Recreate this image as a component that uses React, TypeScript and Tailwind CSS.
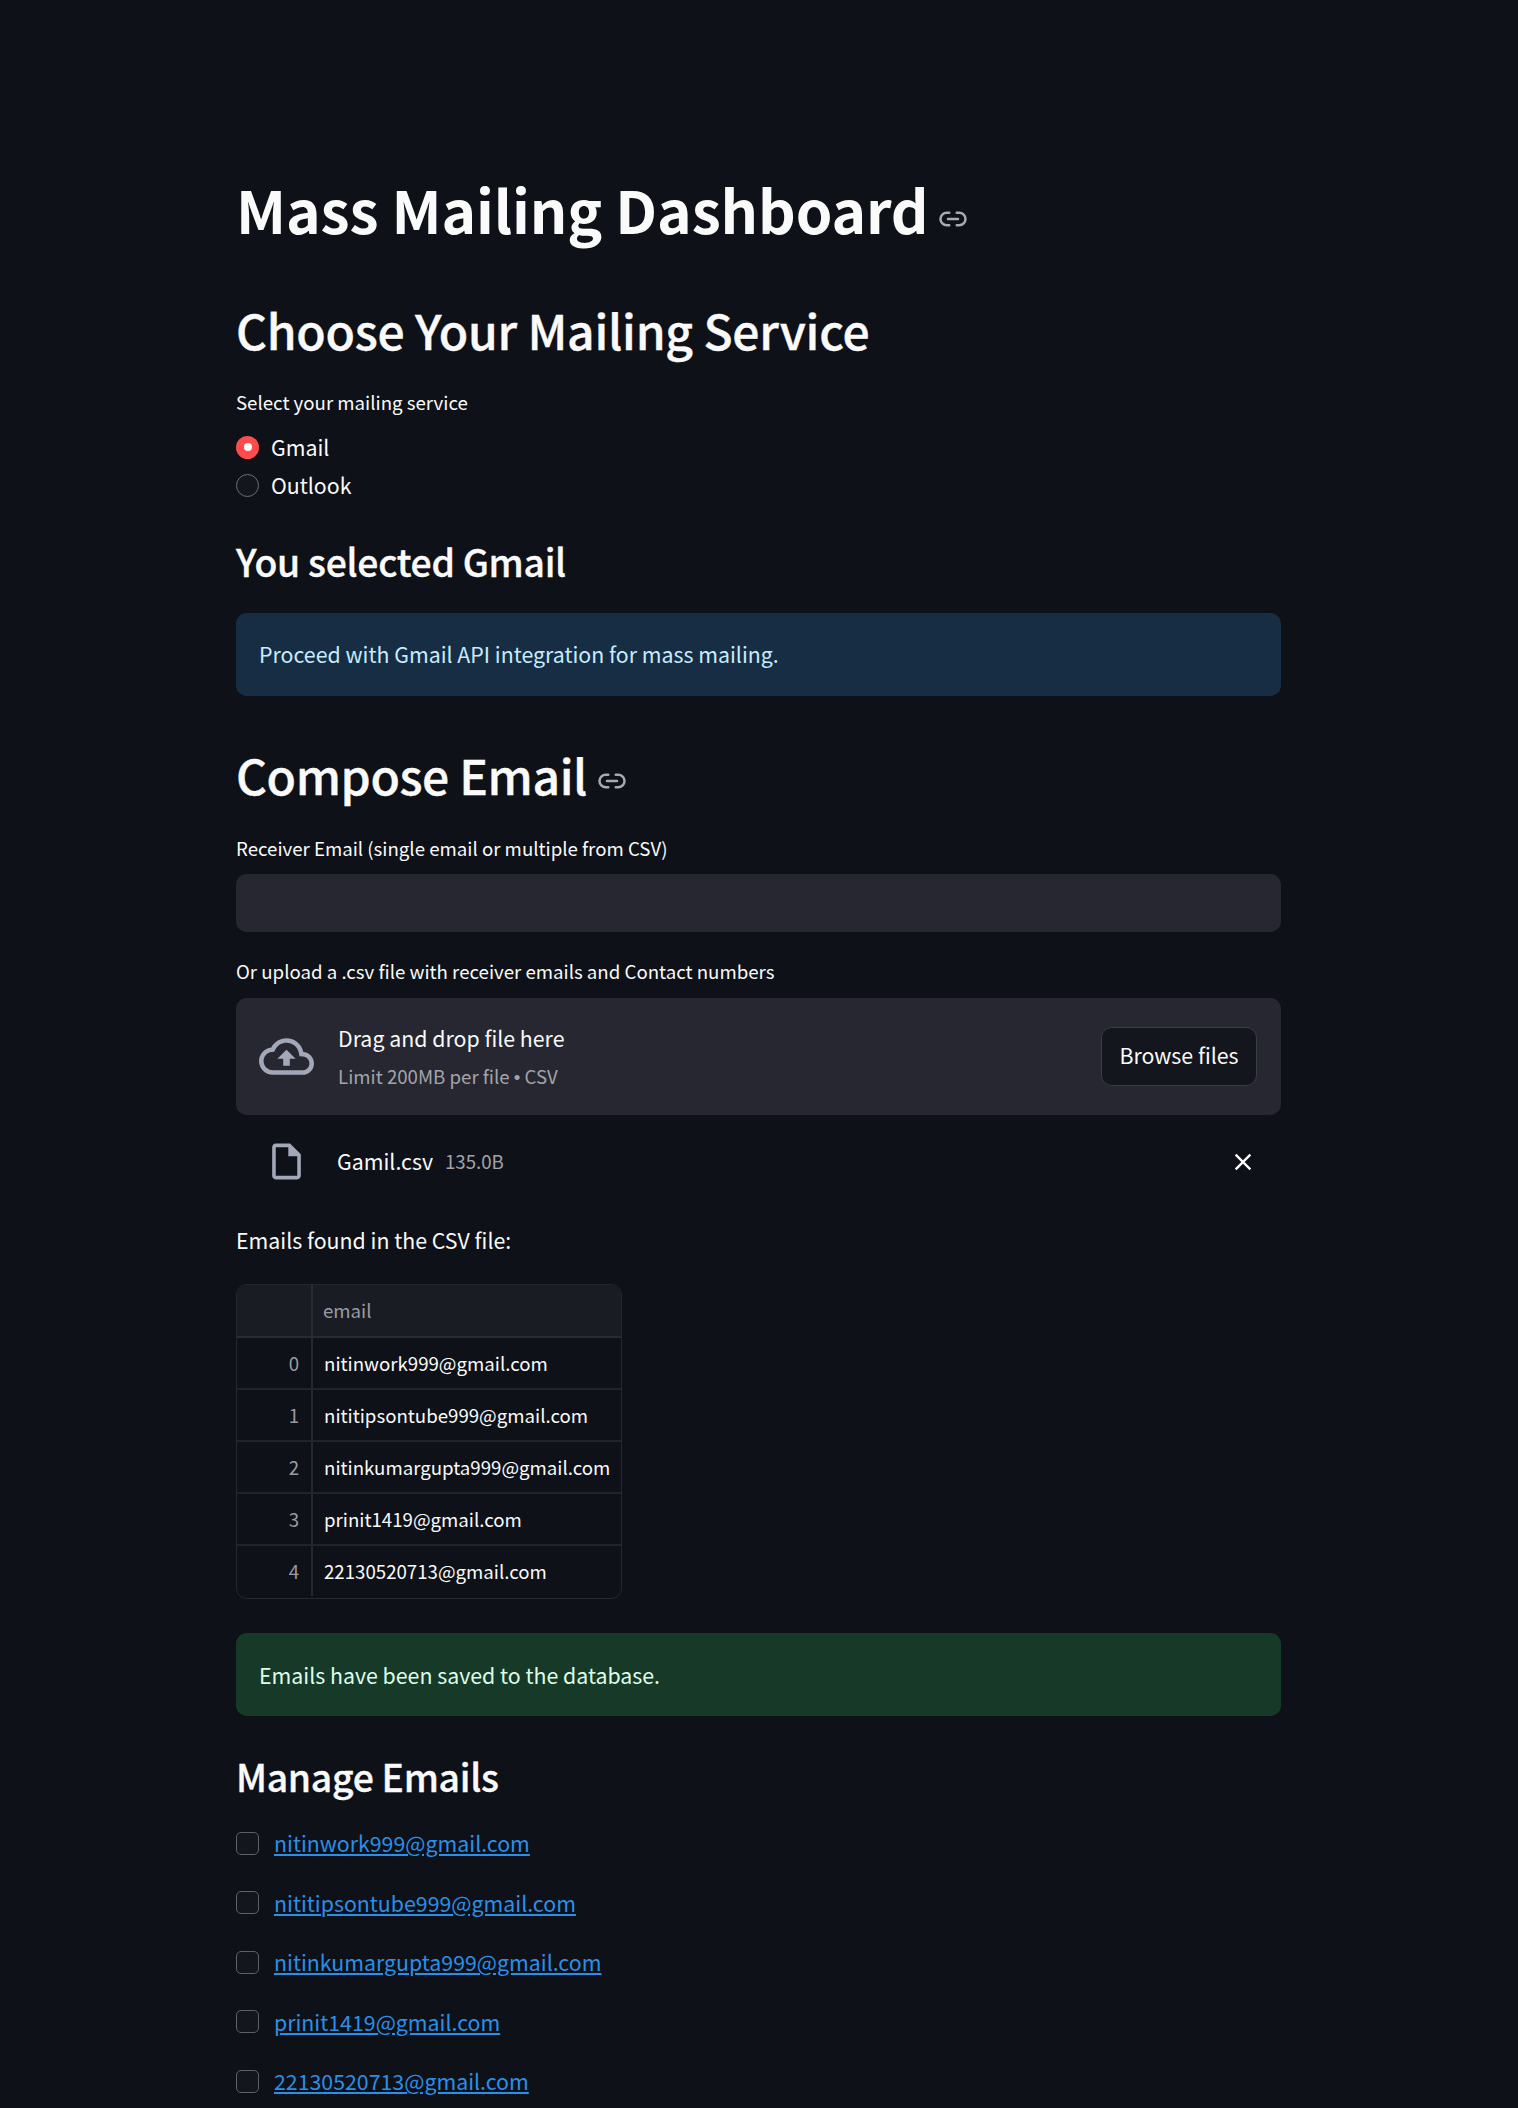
import React from "react";
import { Link2 } from "lucide-react";

const EMAILS = [
  "nitinwork999@gmail.com",
  "nititipsontube999@gmail.com",
  "nitinkumargupta999@gmail.com",
  "prinit1419@gmail.com",
  "22130520713@gmail.com",
];

const FieldLabel = ({ children }: { children: React.ReactNode }) => (
  <p className="h-[25px] text-[18.67px] leading-[25px] text-[#fafafa]">{children}</p>
);

const App = () => {
  return (
    <div className="h-[2108px] overflow-hidden bg-[#0e1117] text-[#fafafa] font-['Noto_Sans_CJK_SC','Noto_Sans',sans-serif]">
      <main className="ml-[236px] w-[1045px] pt-[169px]">
        <div className="flex h-[80px] items-center">
          <h1 className="text-[58.67px] font-bold leading-[80px] tracking-[-0.002em]">Mass Mailing Dashboard</h1>
          <Link2 className="ml-[10px] mt-[19px] size-[30px] shrink-0 text-[#a9aaae]" strokeWidth={2} />
        </div>

        {/* the installed font has no semibold, so medium gets a thin stroke */}
        <h2 className="mt-[48px] h-[64px] text-[48px] font-medium leading-[64px] tracking-[-0.25px] [-webkit-text-stroke:0.4px_#fafafa]">
          Choose Your Mailing Service
        </h2>

        <div className="mt-[28px]">
          <FieldLabel>Select your mailing service</FieldLabel>
        </div>

        <div className="mt-[19px] flex flex-col gap-[10px]">
          <label className="flex h-[28px] items-center">
            <span className="flex size-[23px] items-center justify-center rounded-full bg-[#ff4b4b]">
              <span className="size-[8px] rounded-full bg-white" />
            </span>
            <span className="ml-[12px] text-[21.33px] leading-[28px]">Gmail</span>
          </label>
          <label className="flex h-[28px] items-center">
            <span className="size-[23px] rounded-full border border-[#6c6e75] bg-[#13161d]" />
            <span className="ml-[12px] text-[21.33px] leading-[28px]">Outlook</span>
          </label>
        </div>

        <h3 className="mt-[37px] h-[50px] text-[37.33px] font-medium leading-[50px] tracking-[-0.3px] [-webkit-text-stroke:0.35px_#fafafa]">
          You selected Gmail
        </h3>

        <div className="mt-[27px] flex h-[83px] items-center rounded-[10.67px] bg-[#172d43] px-[23px] pb-[1px] text-[21.33px] text-[#c7ebff]">
          Proceed with Gmail API integration for mass mailing.
        </div>

        <div className="mt-[46px] flex h-[64px] items-center">
          <h2 className="text-[48px] font-medium leading-[64px] tracking-[-0.4px] [-webkit-text-stroke:0.4px_#fafafa]">Compose Email</h2>
          <Link2 className="ml-[10px] mt-[13px] size-[30px] shrink-0 text-[#a9aaae]" strokeWidth={2} />
        </div>

        <div className="mt-[29px]">
          <FieldLabel>Receiver Email (single email or multiple from CSV)</FieldLabel>
        </div>
        <div className="mt-[14px] h-[58px] rounded-[10.67px] bg-[#262730]" />

        <div className="mt-[26px]">
          <FieldLabel>Or upload a .csv file with receiver emails and Contact numbers</FieldLabel>
        </div>
        <div className="mt-[15px] flex h-[117px] items-center rounded-[10.67px] bg-[#262730] pl-[23px] pr-[24px]">
          <svg viewBox="0 0 24 24" className="size-[55px] shrink-0 fill-[#a3a8b8]">
            <path d="M19.35 10.04C18.67 6.59 15.64 4 12 4 9.11 4 6.6 5.64 5.35 8.04 2.34 8.36 0 10.91 0 14c0 3.31 2.69 6 6 6h13c2.76 0 5-2.24 5-5 0-2.64-2.05-4.78-4.65-4.96zM19 18H6c-2.21 0-4-1.79-4-4 0-2.05 1.53-3.76 3.56-3.97l1.07-.11.5-.95C8.08 7.14 9.94 6 12 6c2.62 0 4.88 1.86 5.39 4.43l.3 1.5 1.53.11c1.56.1 2.78 1.41 2.78 2.96 0 1.65-1.35 3-3 3zM8 13h2.55v3h2.9v-3H16l-4-4z" />
          </svg>
          <div className="ml-[24px] mb-[1px] flex-1">
            <p className="text-[21.33px] leading-[32px]">Drag and drop file here</p>
            <p className="mt-[9px] text-[18.67px] leading-[25px] text-[#a3a4a9]">
              Limit 200MB per file <span className="font-['Liberation_Sans']">•</span> CSV
            </p>
          </div>
          <button className="h-[59px] w-[156px] rounded-[10.67px] border border-[#3b3d45] bg-[#13161d] pb-[3px] text-[21.33px] text-[#fafafa]">
            Browse files
          </button>
        </div>

        <div className="mt-[15px] flex h-[62px] items-center pl-[23px] pr-[24px]">
          <svg viewBox="0 0 24 24" className="size-[43px] shrink-0 ml-[6px] fill-[#a3a8b8]">
            <path d="M14 2H6c-1.1 0-1.99.9-1.99 2L4 20c0 1.1.89 2 1.99 2H18c1.1 0 2-.9 2-2V8l-6-6zM6 20V4h7v5h5v11H6z" />
          </svg>
          <span className="ml-[29px] text-[21.33px] leading-[28px]">Gamil.csv</span>
          <span className="ml-[12px] text-[18.67px] leading-[28px] text-[#a3a4a9]">135.0B</span>
          <svg viewBox="0 0 24 24" className="ml-auto mt-[2px] size-[28px] fill-white">
            <path d="M19 6.41L17.59 5 12 10.59 6.41 5 5 6.41 10.59 12 5 17.59 6.41 19 12 13.41 17.59 19 19 17.59 13.41 12z" />
          </svg>
        </div>

        <p className="mt-[34px] h-[28px] text-[21.33px] leading-[28px]">Emails found in the CSV file:</p>

        <div className="mt-[30px] w-[386px] overflow-hidden rounded-[10.67px] border border-[#262730] text-[18.67px]">
          <div className="flex h-[53px] border-b-2 border-[#2a2c35] bg-[#1a1c24] text-[#9a9ba0]">
            <div className="w-[76px] border-r-2 border-[#2a2c35]" />
            <div className="flex flex-1 items-center pb-[1px] pl-[10px]">email</div>
          </div>
          {EMAILS.map((email, i) => (
            <div key={email} className="flex h-[52px] border-b-2 border-[#22242c] last:border-b-0 last:pb-[2px]">
              <div className="flex w-[76px] items-center justify-end border-r-2 border-[#262730] pr-[12px] text-[#9a9ba0]">{i}</div>
              <div className="flex flex-1 items-center pl-[11px]">{email}</div>
            </div>
          ))}
        </div>

        <div className="mt-[34px] flex h-[83px] items-center rounded-[10.67px] bg-[#173928] px-[23px] text-[21.33px] text-[#dffde9]">
          Emails have been saved to the database.
        </div>

        <h3 className="mt-[35px] h-[50px] text-[37.33px] font-medium leading-[50px] tracking-[-0.3px] [-webkit-text-stroke:0.35px_#fafafa]">
          Manage Emails
        </h3>

        <div className="mt-[28px] flex flex-col gap-[31.5px]">
          {EMAILS.map((email) => (
            <div key={email} className="flex h-[28px] items-center">
              <span className="size-[23px] rounded-[5px] border border-[#5f6168] bg-[#13161d]" />
              <a className="ml-[15px] text-[21.33px] leading-[28px] text-[#2a8fe8] underline">{email}</a>
            </div>
          ))}
        </div>
      </main>
    </div>
  );
};

export default App;
